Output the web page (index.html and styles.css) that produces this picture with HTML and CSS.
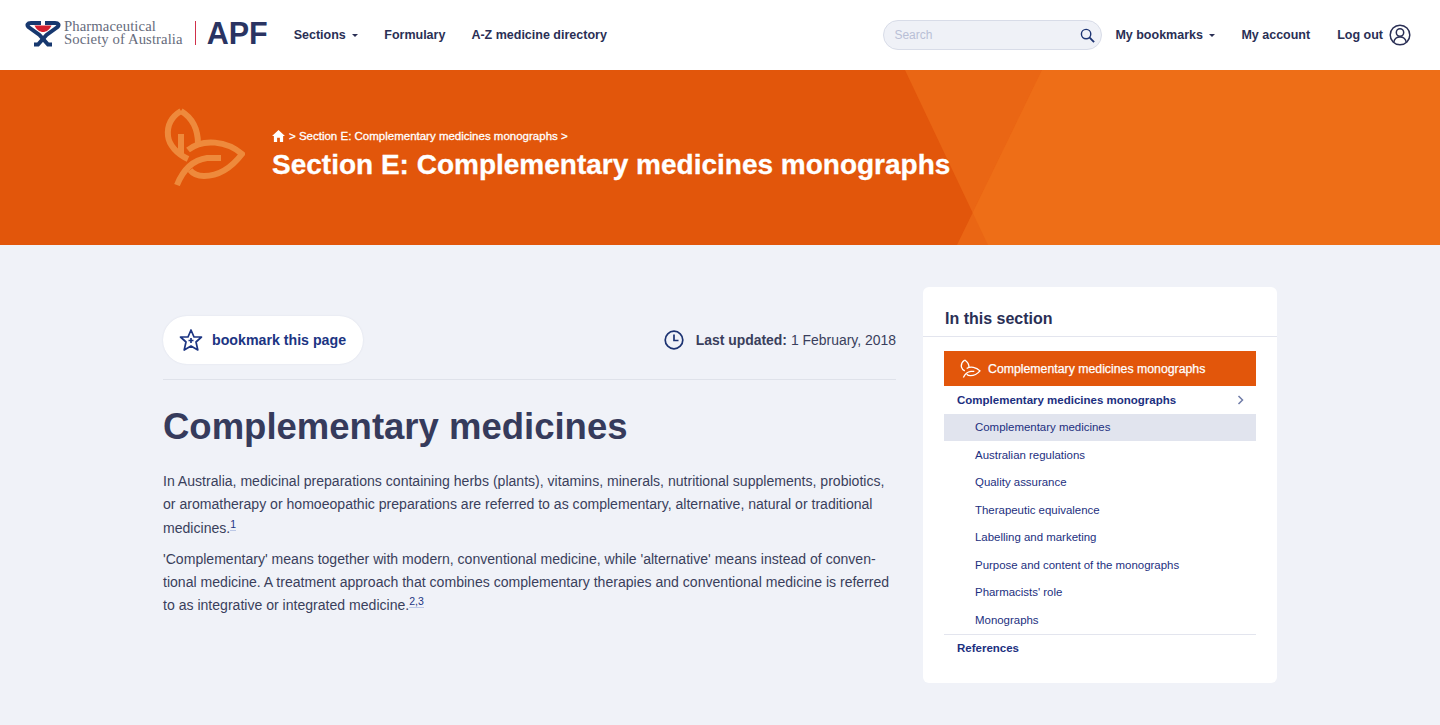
FILE: index.html
```html
<!DOCTYPE html>
<html lang="en">
<head>
    <meta charset="UTF-8">
    <meta name="viewport" content="width=device-width, initial-scale=1.0">
    <title>Complementary medicines</title>
    <link rel="stylesheet" href="styles.css">
</head>
<body>
    <div class="navbar">
        <a href="#" class="logo">
            <svg class="logo-mark" viewBox="0 0 36 27" width="36" height="27" fill="none" stroke="#17386f" stroke-width="4">
                <path d="M16 3H6C2.500 3 1.500 5 3.500 7L14.500 15L23 24.500H27"/>
                <path d="M20 3H30C33.500 3 34.500 5 32.500 7L21.500 15L13 24.500H9"/>
                <path d="M9.500 5.500H26.500C24.500 10 21 12 18 12C15 12 11.500 10 9.500 5.500Z" fill="#d3202f" stroke="none"/>
            </svg>
            <span class="logo-text">Pharmaceutical<br>Society of Australia</span>
            <span class="logo-apf">APF</span>
        </a>
        <div class="nav-links">
            <a href="#">Sections <span class="caret"></span></a>
            <a href="#">Formulary</a>
            <a href="#">A-Z medicine directory</a>
        </div>
        <div class="nav-right">
            <div class="search">
                <span class="search-text">Search</span>
                <svg viewBox="0 0 16 16" width="15" height="15" fill="none" stroke="#1c3372" stroke-width="1.500">
                    <circle cx="6.500" cy="6.500" r="5"/>
                    <path d="M10.300 10.300L15 15" stroke-width="2"/>
                </svg>
            </div>
            <a href="#">My bookmarks <span class="caret"></span></a>
            <a href="#">My account</a>
            <a href="#" class="logout">Log out
                <svg viewBox="0 0 22 22" width="22" height="22" fill="none" stroke="#2a2f55" stroke-width="1.500">
                    <circle cx="11" cy="11" r="9.800"/>
                    <circle cx="11" cy="8.500" r="3.700"/>
                    <path d="M4.800 18C5.500 14.500 8 13 11 13C14 13 16.500 14.500 17.200 18"/>
                </svg>
            </a>
        </div>
    </div>

    <div class="hero">
        <svg class="hero-shapes" viewBox="0 0 1440 175" width="1440" height="175">
            <polygon points="905,0 1440,0 1440,175 988,175" fill="#ea6614"/>
            <polygon points="1042,0 1440,0 1440,175 957,175" fill="#ea6614"/>
            <polygon points="1042,0 1440,0 1440,175 988,175 972.700,142.700" fill="#ee6e17"/>
        </svg>
        <div class="hero-inner">
            <svg class="hero-leaf" viewBox="0 0 82 78" width="82" height="78" fill="none" stroke="#ee8a3c" stroke-width="6">
                <path d="M18 3C8 9 4 18 5 28C6 37 14 46 25 51"/>
                <path d="M18 3C28 9 35 20 35 36"/>
                <path d="M18 26V46"/>
                <path d="M25 42C40 30 64 33 79 46C69 59 57 68 41 68C35 68 30 66 27 62"/>
                <path d="M14 77C20 62 30 52 44 50H58"/>
            </svg>
            <div>
                <div class="breadcrumb">
                    <svg viewBox="0 0 14 13" width="13" height="12" fill="#fff"><path d="M7 0L14 6.500H12V13H8.500V8.500H5.500V13H2V6.500H0Z"/></svg>
                    <span>&gt; Section E: Complementary medicines monographs &gt;</span>
                </div>
                <h1 class="hero-title">Section E: Complementary medicines monographs</h1>
            </div>
        </div>
    </div>

    <div class="content">
        <div class="main">
            <div class="page-tools">
                <a href="#" class="bookmark">
                    <svg viewBox="0 0 24 24" width="24" height="24" fill="none" stroke="#1c3583" stroke-width="1.700" stroke-linejoin="round">
                        <path d="M12 2L15 9H22.500L17 14L18.800 22L12 18L5.200 22L7 14L1.500 9H9Z"/>
                        <path d="M12 10V15M9.500 12.500H14.500"/>
                    </svg>
                    bookmark this page
                </a>
                <div class="updated">
                    <svg viewBox="0 0 20 20" width="20" height="20" fill="none" stroke="#1c3372" stroke-width="1.700">
                        <circle cx="10" cy="10" r="8.800"/>
                        <path d="M10 4.500V10.500H14.500"/>
                    </svg>
                    <span><b>Last updated:</b> 1 February, 2018</span>
                </div>
            </div>
            <h2 class="page-title">Complementary medicines</h2>
            <p>In Australia, medicinal preparations containing herbs (plants), vitamins, minerals, nutritional supplements, probiotics,<br>or aromatherapy or homoeopathic preparations are referred to as complementary, alternative, natural or traditional<br>medicines.<a href="#" class="ref">1</a></p>
            <p>'Complementary' means together with modern, conventional medicine, while 'alternative' means instead of conven-<br>tional medicine. A treatment approach that combines complementary therapies and conventional medicine is referred<br>to as integrative or integrated medicine.<a href="#" class="ref">2,3</a></p>
        </div>

        <div class="sidebar">
            <h3>In this section</h3>
            <div class="side-list">
                <div class="side-head">
                    <svg viewBox="0 0 22 20" width="21" height="19" fill="none" stroke="#fff" stroke-width="1.400">
                        <path d="M5 1C2 3 1 6 1.500 8.500C2 10.500 3 11.500 5 12.500"/>
                        <path d="M5 1C8 3 9.500 6 9.500 9"/>
                        <path d="M7 10C11 7.500 17 8.500 21 12.500C18 16 15 17.500 11 17.500C9.500 17.500 8 17 7 16"/>
                        <path d="M3.500 19.500C5 16 8 13.500 11.500 13H15"/>
                    </svg>
                    Complementary medicines monographs
                </div>
                <a href="#" class="side-group">Complementary medicines monographs
                    <svg viewBox="0 0 7 10" width="7" height="10" fill="none" stroke="#6f7ca8" stroke-width="1.500"><path d="M1.500 1L5.500 5L1.500 9"/></svg>
                </a>
                <a href="#" class="side-item active">Complementary medicines</a>
                <a href="#" class="side-item">Australian regulations</a>
                <a href="#" class="side-item">Quality assurance</a>
                <a href="#" class="side-item">Therapeutic equivalence</a>
                <a href="#" class="side-item">Labelling and marketing</a>
                <a href="#" class="side-item">Purpose and content of the monographs</a>
                <a href="#" class="side-item">Pharmacists' role</a>
                <a href="#" class="side-item">Monographs</a>
                <a href="#" class="side-group side-last">References</a>
            </div>
        </div>
    </div>
</body>
</html>
```

FILE: styles.css
```css
/* Basic Styles */
body {
    font-family: "Liberation Sans", Arial, sans-serif;
    margin: 0;
    padding: 0;
    background-color: #f0f2f8;
    color: #3a3f5c;
}
a {
    text-decoration: none;
}

/* Top bar */
.navbar {
    height: 70px;
    background-color: white;
    display: flex;
    align-items: center;
    padding: 0 29px 0 25px;
}
.navbar a {
    color: #2a2f55;
    font-size: 12.5px;
    font-weight: bold;
}
.logo {
    display: flex;
    align-items: center;
    padding-bottom: 4px;
}
.logo-mark {
    margin-right: 3px;
}
.navbar .logo-text {
    font-family: "Liberation Serif", serif;
    font-size: 14.7px;
    font-weight: normal;
    line-height: 13px;
    letter-spacing: 0.1px;
    color: #666b7c;
    white-space: nowrap;
    padding-right: 12px;
}
.logo-apf {
    font-size: 30.5px;
    line-height: 24px;
    color: #2a3462;
    padding-left: 11px;
    border-left: 1px solid #d0304a;
}
.nav-links {
    display: flex;
    gap: 26px;
    margin-left: 26px;
}
.nav-right {
    display: flex;
    align-items: center;
    gap: 26px;
    margin-left: auto;
}
.caret {
    display: inline-block;
    border-top: 3px solid #2a2f55;
    border-left: 3px solid transparent;
    border-right: 3px solid transparent;
    margin-left: 3px;
    vertical-align: 2px;
}
.search {
    width: 201px;
    height: 28px;
    margin-right: -13px;
    padding: 0 6px 0 10px;
    display: flex;
    align-items: center;
    justify-content: space-between;
    background-color: #eff1f7;
    border: 1px solid #d8dce8;
    border-radius: 15px;
}
.search-text {
    font-size: 12px;
    color: #b9bfd6;
}
.logout {
    display: flex;
    align-items: center;
    gap: 6px;
    margin-left: 1px;
}

/* Orange banner */
.hero {
    height: 175px;
    background-color: #e2560b;
    position: relative;
    overflow: hidden;
}
.hero-shapes {
    position: absolute;
    top: 0;
    left: 0;
}
.hero-inner {
    position: relative;
    width: 1114px;
    margin: 0 auto;
    display: flex;
    align-items: flex-start;
    gap: 27px;
    padding-top: 38px;
    box-sizing: border-box;
    color: white;
}
.breadcrumb {
    display: flex;
    align-items: center;
    gap: 4px;
    font-size: 11.5px;
    -webkit-text-stroke: 0.3px white;
    margin-top: 20px;
    height: 15px;
}
.hero-title {
    margin: 5px 0 0;
    font-size: 28px;
    line-height: 34px;
    white-space: nowrap;
    -webkit-text-stroke: 0.3px white;
}

/* Main content */
.content {
    width: 1114px;
    margin: 0 auto;
    display: flex;
    align-items: flex-start;
    justify-content: space-between;
    padding-top: 42px;
}
.main {
    width: 733px;
    padding-top: 29px;
}
.page-tools {
    display: flex;
    align-items: center;
    justify-content: space-between;
    padding-bottom: 15px;
    border-bottom: 1px solid #dfe2ea;
}
.bookmark {
    display: flex;
    align-items: center;
    gap: 9px;
    height: 48px;
    padding: 0 17px 0 16px;
    background-color: white;
    border-radius: 24px;
    box-shadow: 0 0 2px rgba(40, 50, 100, 0.1);
    color: #1c3583;
    font-size: 14.2px;
    font-weight: bold;
}
.updated {
    display: flex;
    align-items: center;
    gap: 12px;
    font-size: 13.95px;
}
.page-title {
    margin: 25px 0 21px;
    font-size: 36.5px;
    line-height: 44px;
    color: #363b5c;
}
.main p {
    margin: 0 0 8px;
    font-size: 14.07px;
    line-height: 23.3px;
    white-space: nowrap;
}
.ref {
    font-size: 10.5px;
    vertical-align: 5px;
    line-height: 0;
    color: #1c3583;
    border-bottom: 1px solid #bcc8e6;
}

/* Right card */
.sidebar {
    width: 354px;
    height: 396px;
    background-color: white;
    border-radius: 6px;
}
.sidebar h3 {
    margin: 0;
    height: 50px;
    padding: 22px 22px 0;
    box-sizing: border-box;
    font-size: 16px;
    line-height: 19px;
    color: #2a2f55;
    border-bottom: 1px solid #e3e5ee;
}
.side-list {
    margin: 14px 21px 0;
}
.side-head {
    height: 35px;
    display: flex;
    align-items: center;
    gap: 7px;
    padding-left: 16px;
    background-color: #e2560b;
    color: white;
    font-size: 12.3px;
    -webkit-text-stroke: 0.25px white;
}
.side-group {
    height: 27.5px;
    display: flex;
    align-items: center;
    justify-content: space-between;
    padding: 0 12px 0 13px;
    color: #1c2f80;
    font-size: 11.5px;
    font-weight: bold;
}
.side-item {
    display: flex;
    align-items: center;
    height: 27.5px;
    padding-left: 31px;
    color: #1c2f80;
    font-size: 11.45px;
}
.side-item.active {
    background-color: #e1e4ee;
}
.side-last {
    border-top: 1px solid #e3e5ee;
}
```
